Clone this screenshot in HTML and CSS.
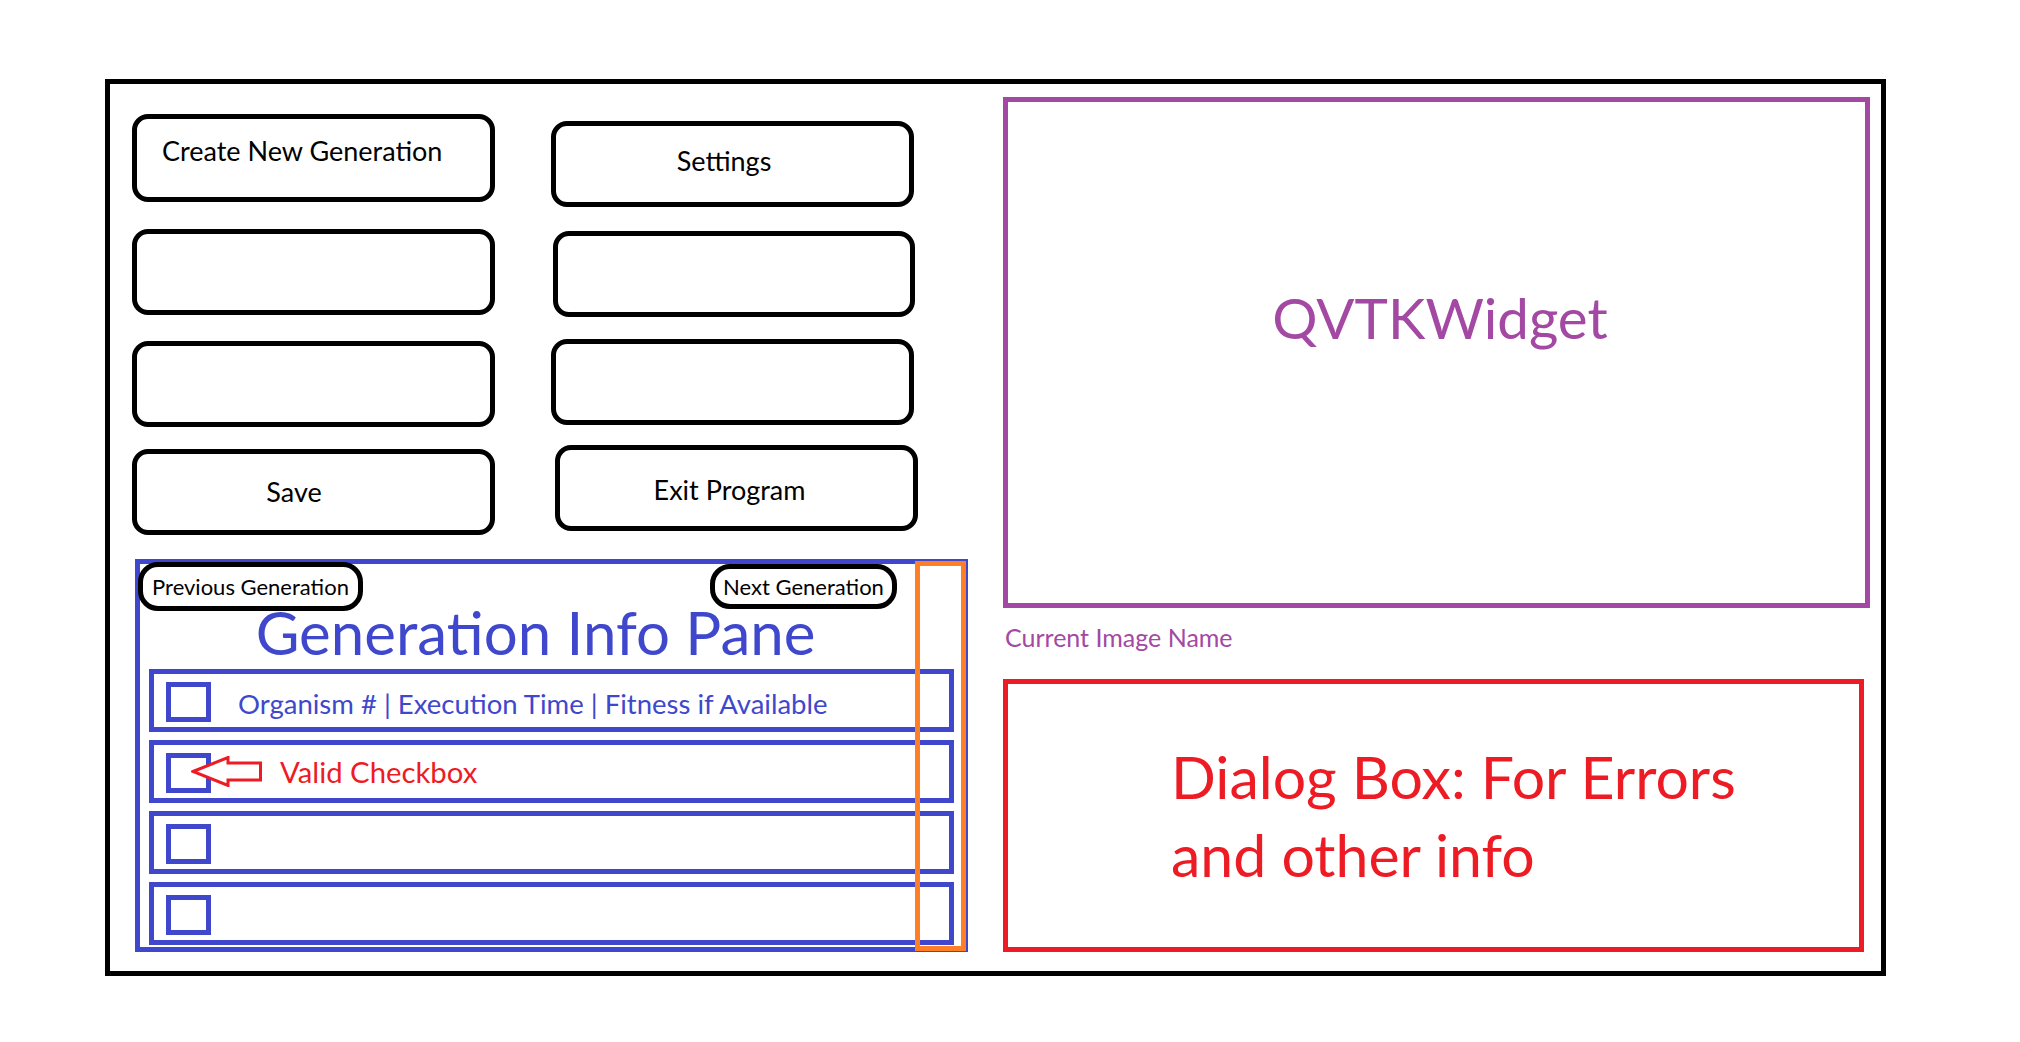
FILE: index.html
```html
<!DOCTYPE html>
<html>
<head>
<meta charset="utf-8">
<title>Layout sketch</title>
<link rel="stylesheet" href="styles.css">
</head>
<body>
<div class="frame">
  <div class="left">
    <div class="buttons">
      <div class="col col-a">
        <div class="btn btn-create">Create New Generation</div>
        <div class="btn btn-a2"></div>
        <div class="btn btn-a3"></div>
        <div class="btn btn-save">Save</div>
      </div>
      <div class="col col-b">
        <div class="btn btn-settings">Settings</div>
        <div class="btn btn-b2"></div>
        <div class="btn btn-b3"></div>
        <div class="btn btn-exit">Exit Program</div>
      </div>
    </div>
    <div class="pane">
      <div class="pane-head">
        <div class="nav nav-prev">Previous Generation</div>
        <div class="nav nav-next">Next Generation</div>
      </div>
      <div class="pane-title">Generation Info Pane</div>
      <div class="rows">
        <div class="row"><span class="cb"></span><span class="row-text">Organism # | Execution Time | Fitness if Available</span></div>
        <div class="row"><span class="cb"></span><svg class="arrow" width="71" height="31" viewBox="0 0 71 31"><polygon points="2,15.5 37,1.5 37,7 69.5,7 69.5,24 37,24 37,29.5" fill="#fff" stroke="#ED1C24" stroke-width="3" stroke-linejoin="miter"/></svg><span class="valid">Valid Checkbox</span></div>
        <div class="row"><span class="cb"></span></div>
        <div class="row"><span class="cb"></span></div>
      </div>
      <div class="scrollbar"></div>
    </div>
  </div>
  <div class="right">
    <div class="vtk">QVTKWidget</div>
    <div class="img-name">Current Image Name</div>
    <div class="dialog">Dialog Box: For Errors<br>and other info</div>
  </div>
</div>
</body>
</html>
```
FILE: styles.css
```css
html, body {
  margin: 0;
  padding: 0;
  background: #fff;
}
body {
  font-family: "Lato", sans-serif;
  color: #000;
}
.frame {
  box-sizing: border-box;
  margin: 79px 0 0 105px;
  width: 1781px;
  height: 897px;
  border: 5px solid #000;
  display: flex;
}
.left {
  box-sizing: border-box;
  width: 858px;
  padding-left: 22px;
  display: flex;
  flex-direction: column;
}
.buttons {
  display: flex;
  gap: 56px;
  padding-top: 30px;
}
.col {
  display: flex;
  flex-direction: column;
}
.btn {
  box-sizing: border-box;
  width: 363px;
  height: 86px;
  border: 5px solid #000;
  border-radius: 16px;
  font-size: 27px;
  line-height: 1;
  white-space: nowrap;
}
.btn-create {
  height: 88px;
  padding: 18px 0 0 25px;
}
.btn-a2 { margin-top: 27px; }
.btn-a3 { margin-top: 26px; }
.btn-save {
  margin-top: 22px;
  padding-top: 24px;
  padding-right: 39px;
  text-align: center;
}
.col-b { margin-top: 7px; }
.btn-settings {
  padding-top: 21px;
  padding-right: 17px;
  text-align: center;
}
.btn-b2 { margin-top: 24px; margin-left: 2px; width: 362px; }
.btn-b3 { margin-top: 22px; }
.btn-exit {
  margin-top: 20px;
  margin-left: 4px;
  padding-top: 26px;
  padding-right: 14px;
  text-align: center;
}
.pane {
  position: relative;
  box-sizing: border-box;
  margin: 24px 0 0 3px;
  width: 833px;
  height: 393px;
  border: 5px solid #3F48CC;
}
.pane-head {
  display: flex;
  align-items: flex-start;
}
.nav {
  box-sizing: border-box;
  display: flex;
  align-items: center;
  justify-content: center;
  border: 5px solid #000;
  border-radius: 20px;
  background: #fff;
  font-size: 22px;
  line-height: 1;
  white-space: nowrap;
}
.nav-prev {
  margin: -2px 0 0 -2px;
  width: 225px;
  height: 49px;
}
.nav-next {
  margin: 0 66px 0 auto;
  width: 187px;
  height: 45px;
}
.pane-title {
  padding-right: 32px;
  text-align: center;
  font-size: 60px;
  line-height: 0.7;
  color: #3F48CC;
}
.rows {
  margin-top: 16px;
  padding-left: 9px;
  display: flex;
  flex-direction: column;
  gap: 8px;
}
.row {
  box-sizing: border-box;
  width: 805px;
  height: 63px;
  border: 5px solid #3F48CC;
  display: flex;
  align-items: center;
}
.cb {
  box-sizing: border-box;
  align-self: flex-start;
  flex: none;
  margin: 8px 0 0 12px;
  width: 45px;
  height: 40px;
  border: 5px solid #3F48CC;
}
.row-text {
  margin: 6px 0 0 27px;
  font-size: 27.5px;
  line-height: 1;
  color: #3F48CC;
  white-space: nowrap;
}
.arrow {
  flex: none;
  margin-left: -20px;
  display: block;
}
.valid {
  margin-left: 18px;
  font-size: 29.3px;
  line-height: 1;
  color: #ED1C24;
}
.scrollbar {
  position: absolute;
  left: 775px;
  top: -3px;
  box-sizing: border-box;
  width: 51px;
  height: 390px;
  border: 5px solid #FF7F27;
}
.right {
  margin-left: 35px;
  display: flex;
  flex-direction: column;
}
.vtk {
  box-sizing: border-box;
  margin-top: 13px;
  width: 867px;
  height: 511px;
  border: 5px solid #A349A4;
  padding: 187px 0 0 7px;
  text-align: center;
  font-size: 56.5px;
  line-height: 1;
  color: #A349A4;
}
.img-name {
  margin: 17px 0 0 2px;
  font-size: 25px;
  line-height: 1;
  color: #A349A4;
}
.dialog {
  box-sizing: border-box;
  margin-top: 29px;
  width: 861px;
  height: 273px;
  border: 5px solid #ED1C24;
  padding: 54px 0 0 163px;
  font-size: 59px;
  line-height: 78px;
  color: #ED1C24;
}
```
